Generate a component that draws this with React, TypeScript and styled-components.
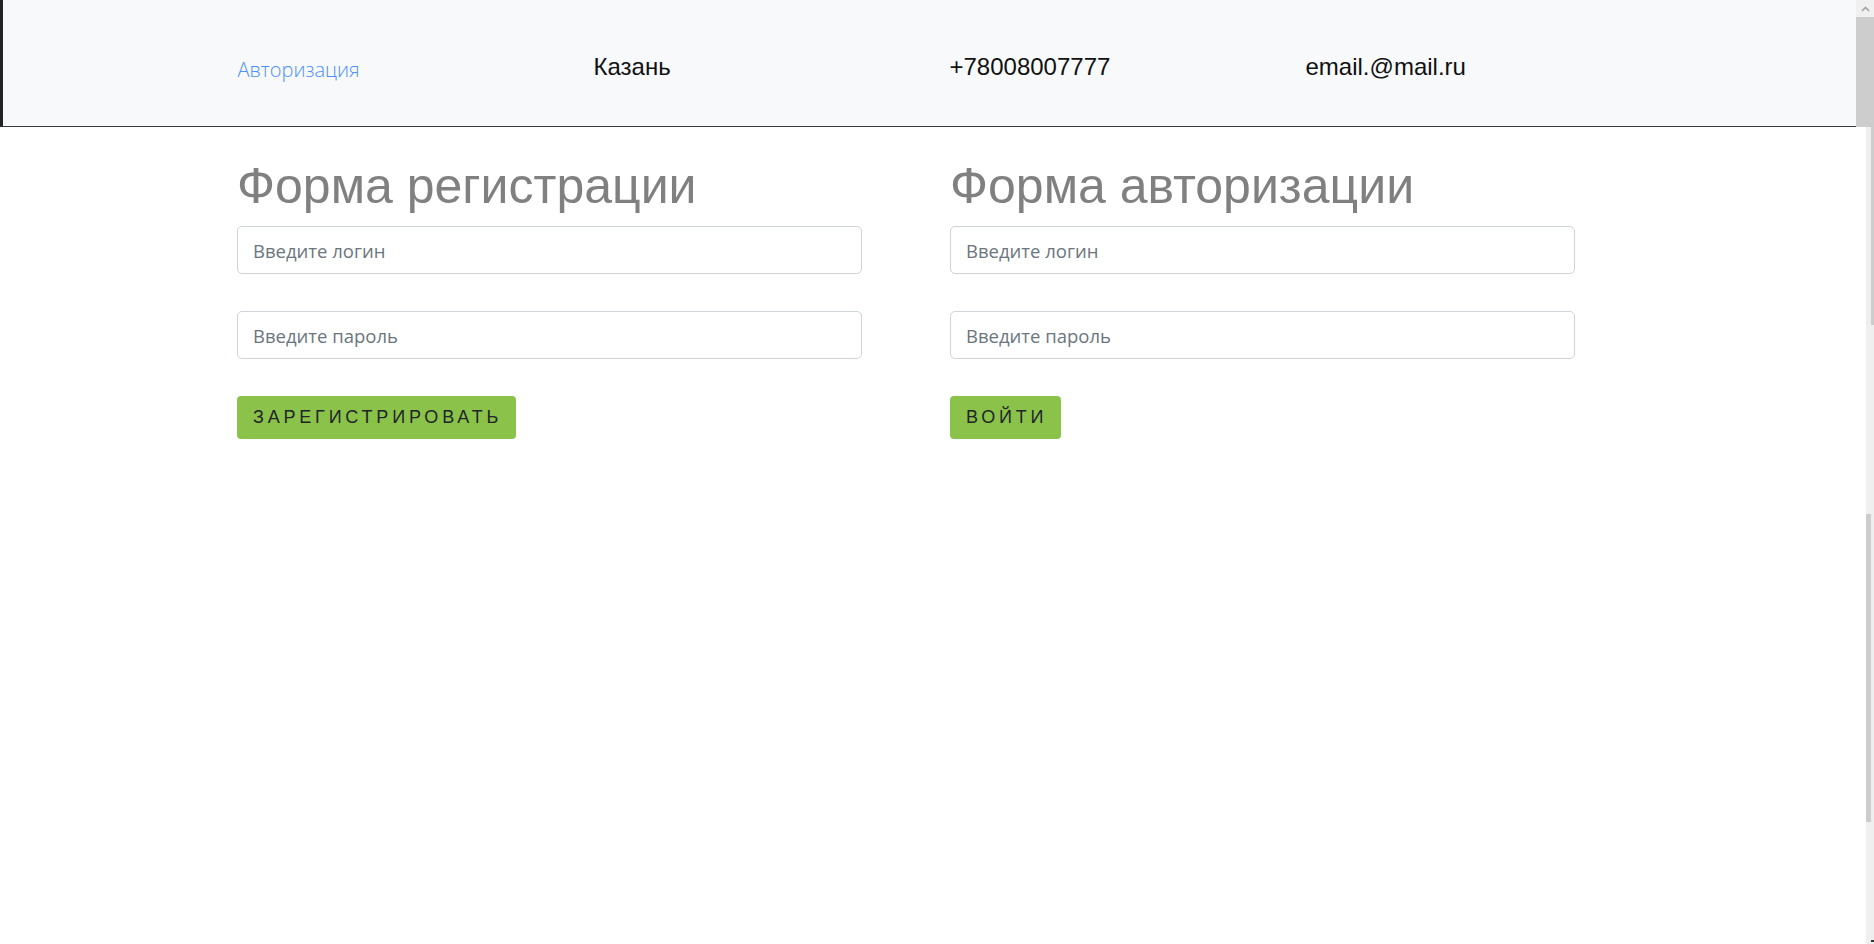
import React from "react";
import styled, { createGlobalStyle } from "styled-components";

const GlobalStyle = createGlobalStyle`
  html, body {
    margin: 0;
    padding: 0;
    background: #ffffff;
    overflow: hidden;
  }
  body {
    font-family: "Liberation Sans", Arial, sans-serif;
    color: #212529;
  }
  * { box-sizing: border-box; }
`;

const Page = styled.div`
  position: relative;
  width: 100%;
  height: 944px;
  background: #ffffff;
`;

const Header = styled.header`
  height: 127px;
  background: #f8f9fa;
  border-left: 3px solid #222428;
  border-bottom: 1px solid #343a40;
  padding-top: 8px;
  display: flex;
  align-items: center;
`;

const Container = styled.div`
  width: 1424px;
  margin: 0 auto;
`;

const HeaderRow = styled(Container)`
  display: grid;
  grid-template-columns: repeat(4, 1fr);
  align-items: center;
  position: relative;
  left: -1px;
`;

const HeaderCell = styled.div`
  padding: 0 12px;
`;

const NavLink = styled.a`
  font-family: "Open Sans", "Segoe UI", sans-serif;
  font-weight: 300;
  font-size: 20px;
  color: #4a90ff;
  text-decoration: none;
  position: relative;
  top: 2px;
`;

const InfoText = styled.span`
  font-family: "Liberation Sans", Arial, sans-serif;
  font-size: 24px;
  color: #111111;
`;

const FormsRow = styled(Container)`
  display: grid;
  grid-template-columns: 1fr 1fr;
  padding-top: 32px;
`;

const FormCol = styled.form<{ $shift?: number }>`
  padding: 0 12px 0 ${(p) => 12 + (p.$shift ?? 0)}px;
  display: flex;
  flex-direction: column;
  align-items: flex-start;
`;

const Title = styled.h1`
  margin: 0 0 12px 0;
  font-family: "Liberation Sans", Arial, sans-serif;
  font-weight: 400;
  font-size: 50px;
  line-height: 55px;
  color: #808080;
  white-space: nowrap;
`;

const Input = styled.input`
  width: 625px;
  height: 48px;
  margin-bottom: 37px;
  padding: 0 15px;
  border: 1px solid #ced4da;
  border-radius: 5px;
  background: #ffffff;
  font-family: "Open Sans", "Segoe UI", sans-serif;
  font-size: 18.5px;
  color: #495057;
  outline: none;
  &::placeholder {
    color: #6c757d;
  }
`;

const Button = styled.button`
  height: 43px;
  padding: 0 14px 0 16px;
  border: none;
  border-radius: 4px;
  background: #8bc34a;
  font-family: "Liberation Sans", Arial, sans-serif;
  font-size: 18px;
  letter-spacing: 3.8px;
  color: #212529;
  cursor: pointer;
`;

const ScrollTop = styled.div`
  position: absolute;
  top: 0;
  right: 0;
  width: 18px;
  height: 127px;
  background: #cdcdcd;
  display: flex;
  flex-direction: column;
`;

const ScrollArrow = styled.div`
  height: 17px;
  background: #f0f0f0;
  display: flex;
  align-items: center;
  justify-content: center;
`;

const ScrollStrip = styled.div`
  position: absolute;
  top: 127px;
  right: 0;
  width: 8px;
  height: 817px;
  background: #efefef;
`;

const Thumb = styled.div<{ $top: number; $height: number; $left: number; $width: number }>`
  position: absolute;
  top: ${(p) => p.$top}px;
  left: ${(p) => p.$left}px;
  width: ${(p) => p.$width}px;
  height: ${(p) => p.$height}px;
  background: #cdcdcd;
`;

const Tick = styled.div`
  position: absolute;
  bottom: 2px;
  right: 0;
  width: 3px;
  height: 2px;
  background: #333;
`;

export default function App() {
  return (
    <Page>
      <GlobalStyle />
      <Header>
        <HeaderRow>
          <HeaderCell>
            <NavLink href="#">Авторизация</NavLink>
          </HeaderCell>
          <HeaderCell>
            <InfoText>Казань</InfoText>
          </HeaderCell>
          <HeaderCell>
            <InfoText>+78008007777</InfoText>
          </HeaderCell>
          <HeaderCell>
            <InfoText>email.@mail.ru</InfoText>
          </HeaderCell>
        </HeaderRow>
      </Header>
      <FormsRow>
        <FormCol onSubmit={(e) => e.preventDefault()}>
          <Title>Форма регистрации</Title>
          <Input type="text" placeholder="Введите логин" />
          <Input type="password" placeholder="Введите пароль" />
          <Button type="submit">ЗАРЕГИСТРИРОВАТЬ</Button>
        </FormCol>
        <FormCol $shift={1} onSubmit={(e) => e.preventDefault()}>
          <Title>Форма авторизации</Title>
          <Input type="text" placeholder="Введите логин" />
          <Input type="password" placeholder="Введите пароль" />
          <Button type="submit">ВОЙТИ</Button>
        </FormCol>
      </FormsRow>
      <ScrollTop>
        <ScrollArrow>
          <svg width="9" height="6" viewBox="0 0 9 6">
            <path d="M1 5 L4.5 1.5 L8 5" fill="none" stroke="#a3a3a3" strokeWidth="1.6" />
          </svg>
        </ScrollArrow>
      </ScrollTop>
      <ScrollStrip>
        <Thumb $top={0} $height={198} $left={5} $width={3} />
        <Thumb $top={387} $height={308} $left={0} $width={5} />
        <Tick />
      </ScrollStrip>
    </Page>
  );
}
